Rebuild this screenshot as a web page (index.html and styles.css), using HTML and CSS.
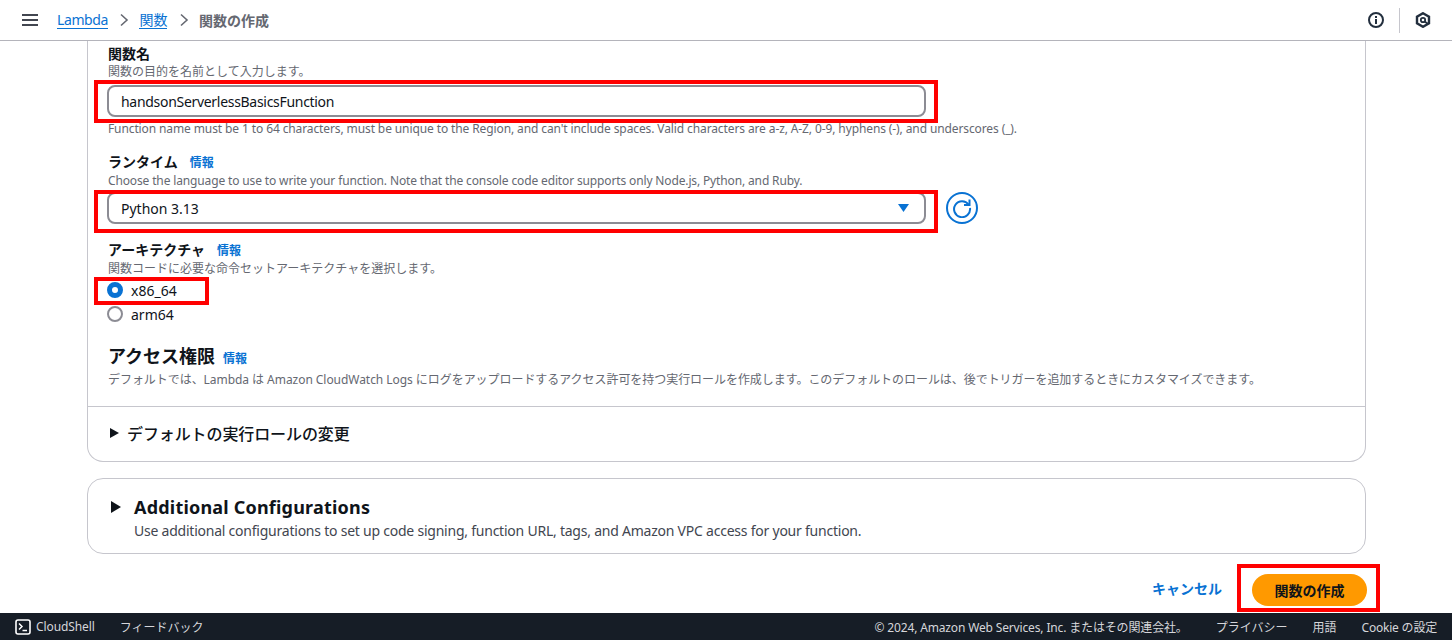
FILE: index.html
```html
<!DOCTYPE html>
<html lang="ja">
<head>
<meta charset="utf-8">
<title>関数の作成</title>
<link rel="stylesheet" href="styles.css">
</head>
<body>
<header class="topbar">
  <svg class="menu" width="16" height="14" viewBox="0 0 16 14"><path d="M0 2h16M0 7h16M0 12h16" stroke="#424650" stroke-width="2"/></svg>
  <nav class="crumbs">
    <a class="crumb-link crumb-latin">Lambda</a>
    <svg class="chev" width="10" height="14" viewBox="0 0 10 14"><path d="M2 1.500 8 7l-6 5.500" fill="none" stroke="#656871" stroke-width="1.600"/></svg>
    <a class="crumb-link">関数</a>
    <svg class="chev" width="10" height="14" viewBox="0 0 10 14"><path d="M2 1.500 8 7l-6 5.500" fill="none" stroke="#656871" stroke-width="1.600"/></svg>
    <span class="crumb-current">関数の作成</span>
  </nav>
  <div class="top-icons">
    <svg width="16" height="16" viewBox="0 0 16 16"><circle cx="8" cy="8" r="7" fill="none" stroke="#232f3e" stroke-width="2"/><path d="M8 7v5M8 4v2" stroke="#232f3e" stroke-width="2"/></svg>
    <span class="top-sep"></span>
    <svg width="16" height="16" viewBox="0 0 16 16"><path d="M8 1.200 14 4.600v6.800L8 14.800 2 11.400V4.600Z" fill="none" stroke="#232f3e" stroke-width="2.400"/><circle cx="8" cy="8" r="2.200" fill="none" stroke="#232f3e" stroke-width="1.800"/><path d="M9.500 9.500l3 2" stroke="#232f3e" stroke-width="2"/></svg>
  </div>
</header>

<main class="content">
  <section class="card card-main">
    <div class="fields">
      <div class="field-name">
        <div class="label">関数名</div>
        <div class="hint">関数の目的を名前として入力します。</div>
        <div class="control hl-wrap">
          <div class="input input-name">handsonServerlessBasicsFunction</div>
          <span class="hl hl-name"></span>
        </div>
        <div class="hint hint-latin hint-after">Function name must be 1 to 64 characters, must be unique to the Region, and can't include spaces. Valid characters are a-z, A-Z, 0-9, hyphens (-), and underscores (_).</div>
      </div>

      <div class="field-runtime">
        <div class="label">ランタイム<a class="info">情報</a></div>
        <div class="hint hint-tight">Choose the language to use to write your function. Note that the console code editor supports only Node.js, Python, and Ruby.</div>
        <div class="select-row">
          <div class="control hl-wrap">
            <div class="input select">Python 3.13
              <svg class="caret" width="11" height="8" viewBox="0 0 11 8"><path d="M0 0h11L5.500 8Z" fill="#0972d3"/></svg>
            </div>
            <span class="hl hl-select"></span>
          </div>
          <span class="refresh">
            <svg width="20" height="20" viewBox="0 0 20 20"><path d="M16.600 6.500A8 8 0 1 0 18 10" fill="none" stroke="#0972d3" stroke-width="2"/><path d="M17.500 1.500v5.500H12" fill="none" stroke="#0972d3" stroke-width="2"/></svg>
          </span>
        </div>
      </div>

      <div class="field-arch">
        <div class="label">アーキテクチャ<a class="info">情報</a></div>
        <div class="hint">関数コードに必要な命令セットアーキテクチャを選択します。</div>
        <div class="radio hl-wrap radio-first"><span class="dot dot-on"></span>x86_64<span class="hl hl-radio"></span></div>
        <div class="radio"><span class="dot"></span>arm64</div>
      </div>

      <div class="field-access">
        <h2 class="heading">アクセス権限<a class="info info-h">情報</a></h2>
        <div class="hint hint-mixed">デフォルトでは、Lambda は Amazon CloudWatch Logs にログをアップロードするアクセス許可を持つ実行ロールを作成します。このデフォルトのロールは、後でトリガーを追加するときにカスタマイズできます。</div>
      </div>
    </div>
    <div class="expander">
      <svg width="9" height="10" viewBox="0 0 9 10"><path d="M0 0l9 5-9 5Z" fill="#0f141a"/></svg>
      <span>デフォルトの実行ロールの変更</span>
    </div>
  </section>

  <section class="card card-extra">
    <svg class="tri" width="10" height="12" viewBox="0 0 10 12"><path d="M0 0l10 6-10 6Z" fill="#0f141a"/></svg>
    <div>
      <div class="extra-title">Additional Configurations</div>
      <div class="extra-desc">Use additional configurations to set up code signing, function URL, tags, and Amazon VPC access for your function.</div>
    </div>
  </section>

  <div class="actions">
    <a class="cancel">キャンセル</a>
    <div class="hl-wrap">
      <button class="primary">関数の作成</button>
      <span class="hl hl-btn"></span>
    </div>
  </div>
</main>

<footer class="footer">
  <svg class="shell" width="16" height="16" viewBox="0 0 16 16"><rect x="1" y="1" width="14" height="14" rx="2" fill="none" stroke="#fff" stroke-width="1.600"/><path d="M4 4.500 7 7.500 4 10.500M7.500 11.500H12" fill="none" stroke="#fff" stroke-width="1.500"/></svg>
  <span class="foot-shell">CloudShell</span>
  <span class="foot-feedback">フィードバック</span>
  <span class="foot-copy">© 2024, Amazon Web Services, Inc. またはその関連会社。</span>
  <span class="foot-link">プライバシー</span>
  <span class="foot-link">用語</span>
  <span class="foot-link foot-cookie">Cookie の設定</span>
</footer>
</body>
</html>
```
FILE: styles.css
```css
* { box-sizing: border-box; }
html, body { margin: 0; height: 640px; overflow: hidden; }
body {
  background: #fff;
  color: #0f141a;
  font-family: "Noto Sans", "Noto Sans CJK JP", sans-serif;
  font-size: 14px;
  display: flex;
  flex-direction: column;
}

.topbar {
  height: 41px;
  flex: none;
  display: flex;
  align-items: center;
  padding: 0 22px;
  border-bottom: 1px solid #b4b4bb;
}
.menu { margin-right: 19px; }
.crumbs { display: flex; align-items: center; font-size: 14px; }
.crumb-link { color: #0972d3; border-bottom: 1px solid #0972d3; line-height: 16px; }
.crumb-latin { letter-spacing: -0.4px; }
.chev { margin: 0 10px 0 11.500px; }
.crumb-current { color: #656871; font-weight: 700; }
.top-icons { margin-left: auto; display: flex; align-items: center; gap: 15px; margin-right: -1px; }
.top-sep { width: 1px; height: 25px; background: #c6c6cd; }

.content { flex: 1; min-height: 0; padding: 0 86px 0 87px; }
.card { border: 1px solid #c6c6cd; background: #fff; }
.card-main { height: 421px; border-top: 0; border-radius: 0 0 16px 16px; }
.fields { height: 366px; padding: 4px 20px 0; border-bottom: 1px solid #c6c6cd; }

.label { font-size: 14px; font-weight: 700; line-height: 18px; color: #0f141a; }
.hint { font-size: 12px; line-height: 18px; color: #656871; white-space: nowrap; }
.hint-latin { letter-spacing: -0.11px; }
.hint-tight { letter-spacing: -0.14px; }
.hint-mixed { letter-spacing: -0.05px; }
.hint-after { margin-top: 3px; }
.info { color: #0972d3; font-size: 12px; font-weight: 700; margin-left: 12px; }
.info-h { margin-left: 8px; }

.control { width: 819px; margin-left: -1px; }
.field-name > .control { margin-top: 4px; }
.hl-wrap { position: relative; }
.hl { position: absolute; border: 4px solid #f00; pointer-events: none; }
.hl-name { inset: -5px -12px -6px -13px; }
.hl-select { inset: -2px -12px -9px -13px; }
.hl-radio { inset: -1px -2px -3px -13px; }
.hl-btn { inset: -10px -13px -6px -15px; }

.input {
  height: 32px;
  border: 2px solid #8c8c94;
  border-radius: 8px;
  padding: 0 12px;
  display: flex;
  align-items: center;
  font-size: 14px;
  color: #0f141a;
}
.input-name { letter-spacing: -0.3px; }
.select { justify-content: space-between; padding-right: 15px; }

.field-runtime { margin-top: 15px; }
.select-row { display: flex; align-items: center; margin-top: 2px; }
.refresh {
  width: 32px; height: 32px;
  margin-left: 20px;
  border: 2px solid #0972d3;
  border-radius: 50%;
  display: flex; align-items: center; justify-content: center;
}

.field-arch { margin-top: 17px; }
.radio { display: flex; align-items: center; height: 24px; font-size: 14px; color: #0f141a; margin-left: -1px; }
.radio-first { width: 100px; }
.dot {
  width: 16px; height: 16px; border-radius: 50%;
  border: 2px solid #8c8c94; margin-right: 8px; flex: none; background: #fff;
}
.dot-on { border: 5px solid #0972d3; }

.field-access { margin-top: 18px; }
.heading { margin: 0; font-size: 18px; font-weight: 700; line-height: 24px; color: #0f141a; }

.expander {
  height: 54px;
  padding: 0 0 3px 22px;
  display: flex;
  align-items: center;
  gap: 8px;
  font-size: 16px;
  font-weight: 500;
  letter-spacing: -0.1px;
}

.card-extra {
  height: 76px;
  margin-top: 16px;
  border-radius: 16px;
  padding: 17px 0 0 23px;
  display: flex;
  gap: 13px;
}
.tri { margin-top: 5px; }
.extra-title { font-size: 18px; font-weight: 700; line-height: 22px; letter-spacing: 0.2px; }
.extra-desc { font-size: 14px; line-height: 20px; color: #424650; margin-top: 3px; letter-spacing: -0.23px; }

.actions { display: flex; justify-content: flex-end; align-items: center; gap: 30px; margin: 20px -1px 0 0; }
.cancel { color: #0972d3; font-weight: 700; font-size: 14px; line-height: 30px; margin-bottom: 2px; }
.primary {
  display: block;
  width: 115px; height: 32px;
  border: 0; border-radius: 16px;
  background: #ff9900;
  color: #0f141a;
  font: 700 14px "Noto Sans", "Noto Sans CJK JP", sans-serif;
}

.footer {
  height: 27px;
  flex: none;
  background: #161d26;
  color: #d5d6da;
  display: flex;
  align-items: center;
  padding: 0 15px;
  font-size: 12px;
}
.shell { margin-right: 5px; }
.foot-shell { letter-spacing: -0.1px; }
.foot-feedback { margin-left: 25px; }
.foot-copy { margin-left: auto; margin-right: 28px; letter-spacing: -0.15px; }
.foot-link + .foot-link { margin-left: 25px; }
.foot-cookie { letter-spacing: -0.2px; }
```
